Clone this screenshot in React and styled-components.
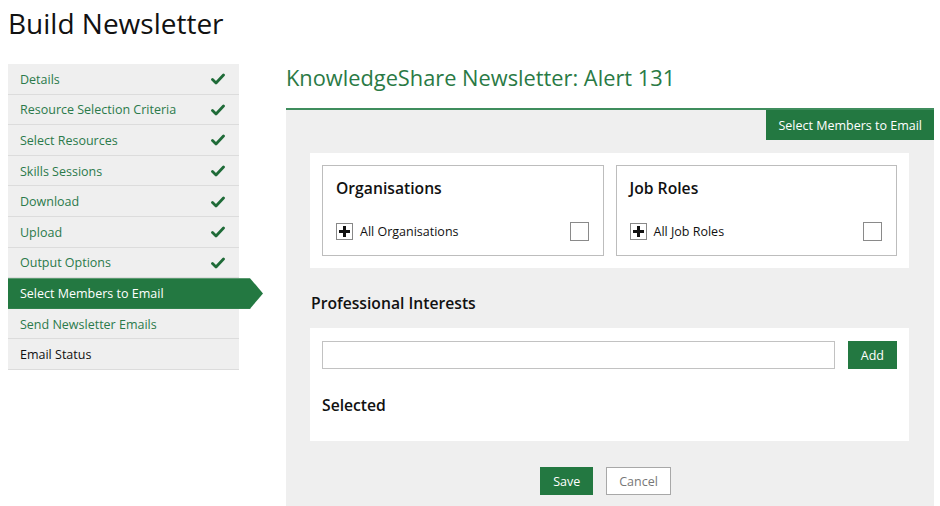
import React from "react";
import styled, { createGlobalStyle } from "styled-components";

const GREEN = "#237841";

const Global = createGlobalStyle`
  * { box-sizing: border-box; }
  html, body { margin: 0; padding: 0; background: #fff; }
  body { font-family: "Open Sans", "Liberation Sans", sans-serif; color: #111; }
`;

const Page = styled.div`
  width: 940px;
  height: 506px;
  overflow: hidden;
  padding: 0 6px 0 8px;
`;

const Title = styled.h1`
  margin: 0;
  padding-top: 3px;
  height: 64px;
  font-size: 28px;
  font-weight: 400;
  line-height: 40px;
  color: #111;
`;

const Layout = styled.div`
  display: flex;
  align-items: flex-start;
`;

const Sidebar = styled.ul`
  list-style: none;
  margin: 0;
  padding: 0;
  width: 231px;
  flex-shrink: 0;
  margin-right: 47px;
`;

const NavItem = styled.li`
  height: 30.6px;
  display: flex;
  align-items: center;
  justify-content: space-between;
  padding: 1px 14px 0 12px;
  font-size: 12.5px;
  background: ${(p) => (p.$active ? GREEN : "#efefef")};
  color: ${(p) => (p.$active ? "#fff" : p.$plain ? "#111" : "#2b7a4b")};
  border-bottom: 1px solid ${(p) => (p.$active ? GREEN : "#dcdcdc")};
  width: ${(p) => (p.$active ? "255px" : "231px")};
  clip-path: ${(p) =>
    p.$active
      ? "polygon(0 0, 242px 0, 100% 50%, 242px 100%, 0 100%)"
      : "none"};
`;

const Check = styled.svg`
  width: 14px;
  height: 12px;
`;

const Main = styled.div`
  flex: 1;
  display: flex;
  flex-direction: column;
`;

const Heading = styled.h2`
  margin: 0;
  height: 44px;
  font-size: 21.8px;
  font-weight: 400;
  line-height: 28px;
  color: #2a7a45;
`;

const Panel = styled.div`
  border-top: 2px solid #3f8d5d;
  background: #efefef;
  height: 400px;
  display: flex;
  flex-direction: column;
  padding: 0 25px 0 24px;
`;

const TabRow = styled.div`
  display: flex;
  justify-content: flex-end;
  margin: 0 -25px 13px 0;
`;

const Tab = styled.div`
  background: ${GREEN};
  color: #fff;
  font-size: 12.5px;
  height: 30px;
  padding: 0 12px;
  display: flex;
  align-items: center;
`;

const WhiteBox = styled.div`
  background: #fff;
  padding: 12px 12px;
`;

const Cards = styled.div`
  display: grid;
  grid-template-columns: 1fr 1fr;
  gap: 12px;
`;

const Card = styled.div`
  border: 1px solid #bdbdbd;
  height: 91px;
  padding: 11px 13px 0 13px;
  display: flex;
  flex-direction: column;
`;

const CardTitle = styled.div`
  font-size: 15.7px;
  font-weight: 600;
  line-height: 22px;
  margin-bottom: 23px;
`;

const OptionRow = styled.div`
  display: flex;
  align-items: center;
  font-size: 12.5px;
  height: 18px;
`;

const PlusBox = styled.span`
  width: 17px;
  height: 17px;
  border: 1px solid #888;
  display: inline-flex;
  align-items: center;
  justify-content: center;
  margin-right: 7px;
  background: #fff;
`;

const OptionLabel = styled.span`
  flex: 1;
`;

const CheckBox = styled.span`
  width: 19px;
  height: 19px;
  border: 1px solid #8a8a8a;
  background: #fff;
  margin-right: 1px;
`;

const SectionTitle = styled.div`
  font-size: 15.7px;
  font-weight: 600;
  line-height: 22px;
  margin: 24px 0 14px 1px;
`;

const InterestBox = styled.div`
  background: #fff;
  padding: 13px 12px 0 12px;
  height: 113px;
`;

const InputRow = styled.div`
  display: flex;
  gap: 13px;
`;

const TextInput = styled.input`
  flex: 1;
  height: 28px;
  border: 1px solid #c2c2c2;
  font-family: inherit;
  font-size: 13px;
  padding: 0 6px;
  outline: none;
`;

const Button = styled.button`
  height: 28px;
  padding: 0 ${(p) => (p.$pad || 12)}px;
  font-family: inherit;
  font-size: 12.5px;
  cursor: pointer;
  background: ${(p) => (p.$secondary ? "#fff" : GREEN)};
  color: ${(p) => (p.$secondary ? "#777" : "#fff")};
  border: 1px solid ${(p) => (p.$secondary ? "#a8a8a8" : GREEN)};
`;

const Selected = styled.div`
  font-size: 15.7px;
  font-weight: 600;
  line-height: 22px;
  margin-top: 25px;
`;

const Actions = styled.div`
  display: flex;
  justify-content: center;
  gap: 13px;
  margin-top: 26px;
  padding-right: 8px;
`;

const steps = [
  { label: "Details", done: true },
  { label: "Resource Selection Criteria", done: true },
  { label: "Select Resources", done: true },
  { label: "Skills Sessions", done: true },
  { label: "Download", done: true },
  { label: "Upload", done: true },
  { label: "Output Options", done: true },
  { label: "Select Members to Email", active: true },
  { label: "Send Newsletter Emails" },
  { label: "Email Status", plain: true },
];

const CheckIcon = () => (
  <Check viewBox="0 0 14 12">
    <path d="M1.5 6.5 L5 10 L12.5 2" fill="none" stroke="#1f6b38" strokeWidth="2.8" strokeLinecap="round" strokeLinejoin="round" />
  </Check>
);

const Plus = () => (
  <PlusBox>
    <svg width="11" height="11" viewBox="0 0 11 11">
      <rect x="4" y="0" width="3" height="11" fill="#111" />
      <rect x="0" y="4" width="11" height="3" fill="#111" />
    </svg>
  </PlusBox>
);

const SelectCard = ({ title, option }) => (
  <Card>
    <CardTitle>{title}</CardTitle>
    <OptionRow>
      <Plus />
      <OptionLabel>{option}</OptionLabel>
      <CheckBox />
    </OptionRow>
  </Card>
);

export default function App() {
  return (
    <Page>
      <Global />
      <Title>Build Newsletter</Title>
      <Layout>
        <Sidebar>
          {steps.map((s) => (
            <NavItem key={s.label} $active={s.active} $plain={s.plain}>
              <span>{s.label}</span>
              {s.done && <CheckIcon />}
            </NavItem>
          ))}
        </Sidebar>
        <Main>
          <Heading>KnowledgeShare Newsletter: Alert 131</Heading>
          <Panel>
            <TabRow>
              <Tab>Select Members to Email</Tab>
            </TabRow>
            <WhiteBox>
              <Cards>
                <SelectCard title="Organisations" option="All Organisations" />
                <SelectCard title="Job Roles" option="All Job Roles" />
              </Cards>
            </WhiteBox>
            <SectionTitle>Professional Interests</SectionTitle>
            <InterestBox>
              <InputRow>
                <TextInput type="text" />
                <Button $pad={12}>Add</Button>
              </InputRow>
              <Selected>Selected</Selected>
            </InterestBox>
            <Actions>
              <Button>Save</Button>
              <Button $secondary>Cancel</Button>
            </Actions>
          </Panel>
        </Main>
      </Layout>
    </Page>
  );
}
